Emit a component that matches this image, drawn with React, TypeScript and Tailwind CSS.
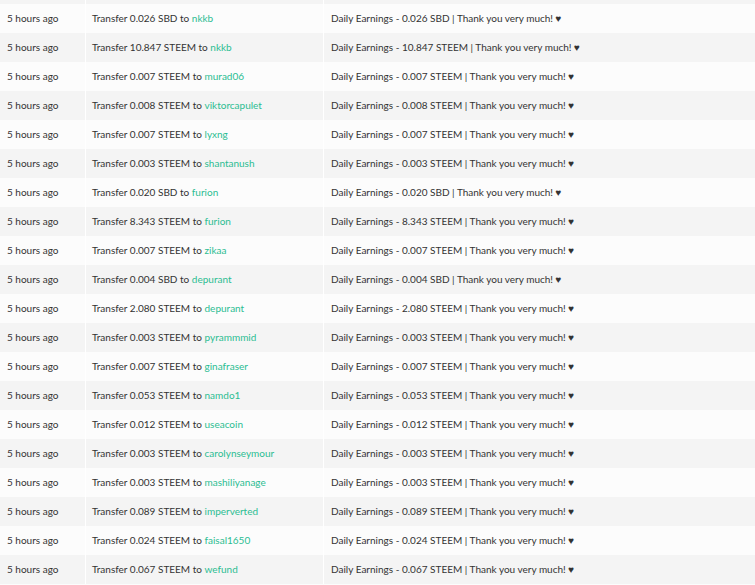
import React from "react";

const rows: [string, string, string][] = [
  ["0.026", "SBD", "nkkb"],
  ["10.847", "STEEM", "nkkb"],
  ["0.007", "STEEM", "murad06"],
  ["0.008", "STEEM", "viktorcapulet"],
  ["0.007", "STEEM", "lyxng"],
  ["0.003", "STEEM", "shantanush"],
  ["0.020", "SBD", "furion"],
  ["8.343", "STEEM", "furion"],
  ["0.007", "STEEM", "zikaa"],
  ["0.004", "SBD", "depurant"],
  ["2.080", "STEEM", "depurant"],
  ["0.003", "STEEM", "pyrammmid"],
  ["0.007", "STEEM", "ginafraser"],
  ["0.053", "STEEM", "namdo1"],
  ["0.012", "STEEM", "useacoin"],
  ["0.003", "STEEM", "carolynseymour"],
  ["0.003", "STEEM", "mashiliyanage"],
  ["0.089", "STEEM", "imperverted"],
  ["0.024", "STEEM", "faisal1650"],
  ["0.067", "STEEM", "wefund"],
];

export default function App() {
  return (
    <div
      className="w-[755px] h-[585px] overflow-hidden bg-[#fcfcfc] text-[10px] text-[#333333]"
      style={{ fontFamily: "Lato, 'Liberation Sans', sans-serif" }}
    >
      <div className="flex h-[4px] bg-[#f4f4f4]">
        <div className="w-[85px]" />
        <div className="w-[238px] border-l border-white" />
        <div className="flex-1 border-l border-white" />
      </div>
      {rows.map(([amt, cur, to], i) => (
        <div
          key={i}
          className={`flex h-[29px] items-center ${i % 2 === 0 ? "bg-[#fcfcfc]" : "bg-[#f4f4f4]"}`}
        >
          <div className="w-[85px] h-full flex items-center pl-[7px] whitespace-nowrap">5 hours ago</div>
          <div className="w-[238px] h-full flex items-center pl-[6px] border-l border-white whitespace-nowrap">
            Transfer {amt} {cur} to&nbsp;<span className="text-[#2bbd92]">{to}</span>
          </div>
          <div className="flex-1 h-full flex items-center pl-[7px] border-l border-white whitespace-nowrap">
            Daily Earnings - {amt} {cur} | Thank you very much! ♥
          </div>
        </div>
      ))}
    </div>
  );
}
